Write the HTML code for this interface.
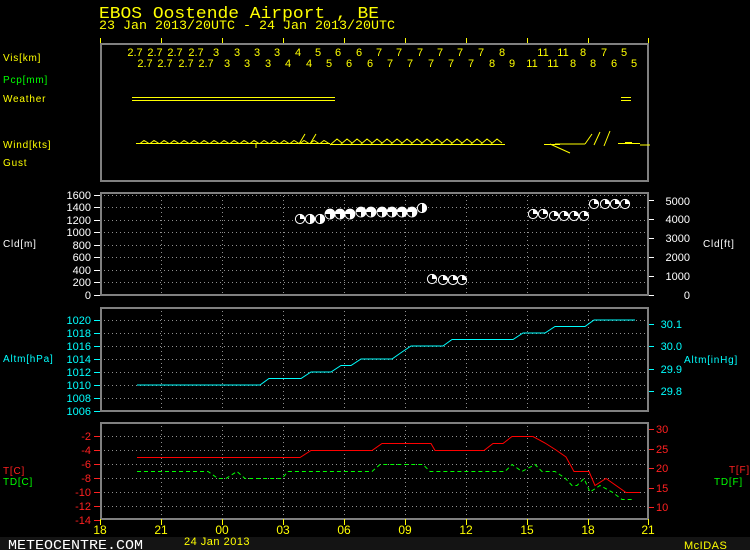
<!DOCTYPE html>
<html><head><meta charset="utf-8"><style>
html,body{margin:0;padding:0;background:#000;}
svg{display:block;}
text{font-family:"Liberation Sans",sans-serif;}
.m{font-family:"Liberation Mono",monospace;}
</style></head><body>
<svg width="750" height="550" viewBox="0 0 750 550" xmlns="http://www.w3.org/2000/svg">
<rect width="750" height="550" fill="#000"/>
<text x="99" y="18" class="m" font-size="17" fill="#ffff00" textLength="280" lengthAdjust="spacingAndGlyphs">EBOS  Oostende Airport ,  BE</text>
<text x="99" y="29" class="m" font-size="13" fill="#ffff00" textLength="296" lengthAdjust="spacingAndGlyphs">23 Jan 2013/20UTC - 24 Jan 2013/20UTC</text>
<g stroke="#ffff00" stroke-width="1">
<path d="M100.5,38V43M161.5,38V43M222.5,38V43M283.5,38V43M344.5,38V43M405.5,38V43M466.5,38V43M527.5,38V43M588.5,38V43M648.5,38V43"/>
</g>
<g font-size="10" letter-spacing="0.8">
<text x="3" y="61" fill="#ffff00">Vis[km]</text>
<text x="3" y="83" fill="#00ff00">Pcp[mm]</text>
<text x="3" y="102" fill="#ffff00">Weather</text>
<text x="3" y="148" fill="#ffff00">Wind[kts]</text>
<text x="3" y="166" fill="#ffff00">Gust</text>
<text x="3" y="247" fill="#ffffff">Cld[m]</text>
<text x="3" y="362" fill="#00ffff">Altm[hPa]</text>
<text x="3" y="474" fill="#ff2020">T[C]</text>
<text x="3" y="485" fill="#00ff00">TD[C]</text>
<text x="703" y="247" fill="#ffffff">Cld[ft]</text>
<text x="684" y="363" fill="#00ffff">Altm[inHg]</text>
<text x="729" y="473" fill="#ff2020">T[F]</text>
<text x="714" y="485" fill="#00ff00">TD[F]</text>
</g>
<g stroke="#909090" stroke-width="1" stroke-dasharray="1,3">
<path d="M161.5,192V295M222.5,192V295M283.5,192V295M344.5,192V295M405.5,192V295M466.5,192V295M527.5,192V295M588.5,192V295"/>
<path d="M100,195.5H648M100,207.5H648M100,220.5H648M100,232.5H648M100,245.5H648M100,257.5H648M100,270.5H648M100,282.5H648"/>
<path d="M161.5,307V411M222.5,307V411M283.5,307V411M344.5,307V411M405.5,307V411M466.5,307V411M527.5,307V411M588.5,307V411"/>
<path d="M100,320.5H648M100,333.5H648M100,346.5H648M100,359.5H648M100,372.5H648M100,385.5H648M100,398.5H648"/>
<path d="M161.5,422V519M222.5,422V519M283.5,422V519M344.5,422V519M405.5,422V519M466.5,422V519M527.5,422V519M588.5,422V519"/>
<path d="M100,436.5H648M100,450.5H648M100,464.5H648M100,478.5H648M100,492.5H648M100,506.5H648"/>
</g>
<g fill="none" stroke="#808080" stroke-width="2">
<rect x="101" y="44" width="547" height="137"/>
<rect x="101" y="193" width="547" height="102"/>
<rect x="101" y="308" width="547" height="103"/>
<rect x="101" y="423" width="547" height="96"/>
</g>
<g font-size="11" fill="#ffff00" text-anchor="middle">
<text x="135" y="56">2.7</text><text x="155" y="56">2.7</text><text x="175" y="56">2.7</text><text x="196" y="56">2.7</text>
<text x="216" y="56">3</text><text x="237" y="56">3</text><text x="257" y="56">3</text><text x="277" y="56">3</text>
<text x="298" y="56">4</text><text x="318" y="56">5</text><text x="338" y="56">6</text><text x="359" y="56">6</text>
<text x="379" y="56">7</text><text x="399" y="56">7</text><text x="420" y="56">7</text><text x="440" y="56">7</text>
<text x="460" y="56">7</text><text x="481" y="56">7</text><text x="502" y="56">8</text>
<text x="543" y="56">11</text><text x="563" y="56">11</text><text x="583" y="56">8</text><text x="604" y="56">7</text><text x="624" y="56">5</text>
<text x="145" y="67">2.7</text><text x="165" y="67">2.7</text><text x="186" y="67">2.7</text><text x="206" y="67">2.7</text>
<text x="227" y="67">3</text><text x="247" y="67">3</text><text x="268" y="67">3</text><text x="288" y="67">4</text>
<text x="309" y="67">4</text><text x="329" y="67">5</text><text x="349" y="67">6</text><text x="370" y="67">6</text>
<text x="390" y="67">7</text><text x="410" y="67">7</text><text x="431" y="67">7</text><text x="451" y="67">7</text>
<text x="471" y="67">7</text><text x="492" y="67">8</text><text x="512" y="67">9</text><text x="532" y="67">11</text>
<text x="553" y="67">11</text><text x="573" y="67">8</text><text x="593" y="67">8</text><text x="614" y="67">6</text><text x="634" y="67">5</text>
</g>
<g stroke="#ffff00" stroke-width="1">
<path d="M132,97.5H335M132,100.5H335M621,97.5H631M621,100.5H631"/>
</g>
<g stroke="#ffff00" stroke-width="1" fill="none">
<path d="M136,143.5H330"/>
<path d="M140,143.5 l4,-3 l5,3 m1,0 l4,-3 l5,3 m1,0 l4,-3 l5,3 m1,0 l4,-3 l5,3 m1,0 l4,-3 l5,3 m1,0 l4,-3 l5,3 m1,0 l4,-3 l5,3 m1,0 l4,-3 l5,3 m1,0 l4,-3 l5,3 m1,0 l4,-3 l5,3 m1,0 l4,-3 l5,3 m1,0 l4,-3 l5,3 m1,0 l4,-3 l5,3 m1,0 l4,-3 l5,3 m1,0 l4,-3 l5,3 m1,0 l4,-3 l5,3 m1,0 l4,-3 l5,3 m1,0 l4,-3 l5,3 m1,0 l4,-3 l5,3"/>
<path d="M256,144 v4 M299,144 l6,-10 M310,144 l6,-10"/>
<path d="M330,145 l7,-6 l5,4 m-2,2 l7,-6 l5,4 m-2,2 l7,-6 l5,4 m-2,2 l7,-6 l5,4 m-2,2 l7,-6 l5,4 m-2,2 l7,-6 l5,4 m-2,2 l7,-6 l5,4 m-2,2 l7,-6 l5,4 m-2,2 l7,-6 l5,4 m-2,2 l7,-6 l5,4 m-2,2 l7,-6 l5,4 m-2,2 l7,-6 l5,4 m-2,2 l7,-6 l5,4 m-2,2 l7,-6 l5,4 m-2,2 l7,-6 l5,4 m-2,2 l7,-6 l5,4 m-2,2 l7,-6 l5,4"/>
<path d="M330,144.5H505"/>
<path d="M544,144.5H560 M550,144 L570,153 M555,144 H585 M585,144 L592,134 M594,145 L600,132 M604,146 L610,131"/>
<path d="M618,143.5H640 M625,142.5H632 M640,145H650"/>
</g>
<g font-size="11" fill="#ffffff" text-anchor="end">
<text x="91" y="199">1600</text><text x="91" y="211">1400</text><text x="91" y="224">1200</text><text x="91" y="236">1000</text>
<text x="91" y="249">800</text><text x="91" y="261">600</text><text x="91" y="274">400</text><text x="91" y="286">200</text><text x="91" y="299">0</text>
</g>
<g font-size="11" fill="#ffffff" text-anchor="end">
<text x="690" y="205">5000</text><text x="690" y="223">4000</text><text x="690" y="242">3000</text><text x="690" y="261">2000</text><text x="690" y="280">1000</text><text x="690" y="299">0</text>
</g>
<g stroke="#ffffff" stroke-width="1">
<path d="M94,195.5H100M94,207.5H100M94,220.5H100M94,232.5H100M94,245.5H100M94,257.5H100M94,270.5H100M94,282.5H100M94,295.5H100"/>
<path d="M649,200.5H654M649,219.5H654M649,238.5H654M649,257.5H654M649,276.5H654M649,295.5H654"/>
</g>
<defs>
<g id="bk"><circle r="5" fill="#fff"/><path d="M0,0 V5 A5,5 0 0 1 -5,0 Z" fill="#000"/><circle r="5" fill="none" stroke="#fff" stroke-width="0.8"/></g>
<g id="sc"><circle r="4.6" fill="#000" stroke="#fff" stroke-width="1"/><path d="M0,0 V-5 A5,5 0 0 1 5,0 Z" fill="#fff"/></g>
<g id="hf"><circle r="4.6" fill="#000" stroke="#fff" stroke-width="1"/><path d="M0,-5 A5,5 0 0 1 0,5 Z" fill="#fff"/></g>
</defs>
<use href="#sc" x="300" y="219"/><use href="#hf" x="310" y="219"/><use href="#hf" x="320" y="219"/>
<use href="#bk" x="330" y="214"/><use href="#bk" x="340" y="214"/><use href="#bk" x="350" y="214"/>
<use href="#bk" x="361" y="212"/><use href="#bk" x="371" y="212"/><use href="#bk" x="382" y="212"/><use href="#bk" x="392" y="212"/><use href="#bk" x="402" y="212"/><use href="#bk" x="412" y="212"/>
<use href="#hf" x="422" y="208"/>
<use href="#sc" x="432" y="279"/><use href="#sc" x="443" y="280"/><use href="#sc" x="453" y="280"/><use href="#sc" x="462" y="280"/>
<use href="#sc" x="533" y="214"/><use href="#sc" x="543" y="214"/><use href="#sc" x="554" y="216"/><use href="#sc" x="564" y="216"/><use href="#sc" x="574" y="216"/><use href="#sc" x="584" y="216"/>
<use href="#sc" x="594" y="204"/><use href="#sc" x="605" y="204"/><use href="#sc" x="615" y="204"/><use href="#sc" x="625" y="204"/>
<g font-size="11" fill="#00ffff" text-anchor="end">
<text x="91" y="324">1020</text><text x="91" y="337">1018</text><text x="91" y="350">1016</text><text x="91" y="363">1014</text>
<text x="91" y="376">1012</text><text x="91" y="389">1010</text><text x="91" y="402">1008</text><text x="91" y="415">1006</text>
<text x="682" y="328">30.1</text><text x="682" y="350">30.0</text><text x="682" y="373">29.9</text><text x="682" y="395">29.8</text>
</g>
<g stroke="#00ffff" stroke-width="1">
<path d="M94,320.5H100M94,333.5H100M94,346.5H100M94,359.5H100M94,372.5H100M94,385.5H100M94,398.5H100M94,411.5H100"/>
<path d="M649,324.5H654M649,346.5H654M649,369.5H654M649,391.5H654"/>
</g>
<polyline fill="none" stroke="#00ffff" stroke-width="1" points="137,385 260,385 269,378.5 301,378.5 311,372 331,372 341,365.5 351,365.5 361,359 392,359 402,352 411,346 443,346 452,339.5 513,339.5 523,333 545,333 555,326.5 585,326.5 594,320 635,320"/>
<g font-size="11" fill="#ff2020" text-anchor="end">
<text x="91" y="440">-2</text><text x="91" y="454">-4</text><text x="91" y="468">-6</text><text x="91" y="482">-8</text>
<text x="91" y="496">-10</text><text x="91" y="510">-12</text><text x="91" y="524">-14</text>
</g>
<g font-size="11" fill="#ff2020">
<text x="656" y="433">30</text><text x="656" y="453">25</text><text x="656" y="472">20</text><text x="656" y="492">15</text><text x="656" y="511">10</text>
</g>
<g stroke="#ff2020" stroke-width="1">
<path d="M94,436.5H100M94,450.5H100M94,464.5H100M94,478.5H100M94,492.5H100M94,506.5H100M94,520.5H100"/>
<path d="M649,429.5H654M649,449.5H654M649,468.5H654M649,488.5H654M649,507.5H654"/>
</g>
<polyline fill="none" stroke="#ff0000" stroke-width="1" points="137,457.5 300,457.5 311,450.5 372,450.5 382,443.5 431,443.5 435,450.5 484,450.5 493,443.5 503,443.5 512,436.5 533,436.5 545,443 556,450 566,457 574,471.5 589,471.5 595,485.5 606,478.5 626,492.5 640,492.5"/>
<polyline fill="none" stroke="#00ff00" stroke-width="1" stroke-dasharray="4,3" points="137,471.5 208,471.5 218,478.5 226,478.5 237,471.5 245,478.5 282,478.5 288,471.5 372,471.5 380,464.5 423,464.5 430,471.5 505,471.5 512,464.5 522,471.5 535,464.5 542,471.5 555,471.5 565,478 572,485.5 577,485.5 584,478.5 590,492 600,485.5 612,492 622,499.5 632,499.5"/>
<g stroke="#ffff00" stroke-width="1">
<path d="M100.5,519V525M161.5,519V525M222.5,519V525M283.5,519V525M344.5,519V525M405.5,519V525M466.5,519V525M527.5,519V525M588.5,519V525M648.5,519V525"/>
</g>
<g font-size="12" fill="#ffff00" text-anchor="middle">
<text x="100" y="534">18</text><text x="161" y="534">21</text><text x="222" y="534">00</text><text x="283" y="534">03</text><text x="344" y="534">06</text>
<text x="405" y="534">09</text><text x="466" y="534">12</text><text x="527" y="534">15</text><text x="588" y="534">18</text><text x="648" y="534">21</text>
</g>
<rect x="0" y="537" width="750" height="13" fill="#141414"/>
<text x="184" y="545" font-size="11" fill="#ffff00" letter-spacing="0.5">24 Jan 2013</text>
<text x="8" y="549" class="m" font-size="14" fill="#ffffff" textLength="135" lengthAdjust="spacingAndGlyphs">METEOCENTRE.COM</text>
<text x="684" y="549" font-size="11" fill="#ffff00" letter-spacing="0.5">McIDAS</text>
</svg>
</body></html>
